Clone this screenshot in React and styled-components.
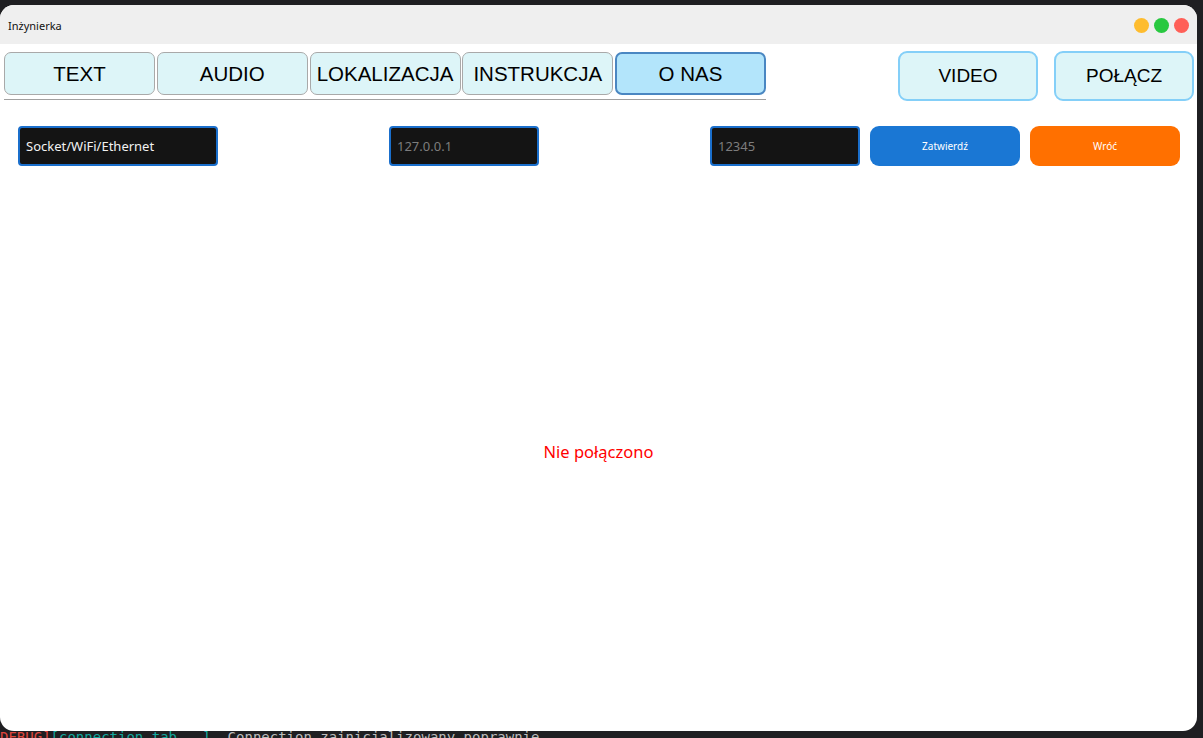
import React from "react";
import styled, { createGlobalStyle } from "styled-components";

const Global = createGlobalStyle`
  html, body { margin: 0; padding: 0; background: #1f1f22; }
  body { width: 1203px; height: 738px; overflow: hidden; font-family: "Liberation Sans", Arial, sans-serif; }
  #root { height: 100%; }
`;

const Desktop = styled.div`
  height: 738px;
  display: flex;
  flex-direction: column;
  background: #1f1f22;
`;

const TopStrip = styled.div`
  height: 5px;
  flex: none;
`;

const Window = styled.div`
  flex: none;
  height: 726px;
  width: 1197px;
  background: #ffffff;
  border-radius: 14px;
  overflow: hidden;
  display: flex;
  flex-direction: column;
`;

const BottomStrip = styled.div`
  height: 7px;
  overflow: hidden;
  flex: none;
  font-family: "DejaVu Sans Mono", monospace;
  font-size: 14px;
  line-height: 12px;
  white-space: pre;
  color: #bdbdbd;
`;

const Red = styled.span` color: #e0463d; `;
const Teal = styled.span` color: #13a89e; `;

const TitleBar = styled.div`
  height: 39px;
  flex: none;
  background: #efefef;
  display: flex;
  align-items: center;
  padding: 0 8px 0 8px;
  font-family: "Noto Sans", "Open Sans", sans-serif;
  font-size: 11px;
  color: #111;
`;

const Title = styled.div`
  flex: 1;
  padding-top: 2px;
`;

const Lights = styled.div`
  display: flex;
  gap: 5px;
  padding-top: 1px;
`;

const Light = styled.span`
  width: 15px;
  height: 15px;
  border-radius: 50%;
  background: ${(p) => p.$c};
`;

const TopRow = styled.div`
  display: flex;
  align-items: flex-start;
  padding: 7px 3px 0 4px;
`;

const TabGroup = styled.div`
  display: flex;
  flex-direction: column;
`;

const Tabs = styled.div`
  display: flex;
  gap: 1.75px;
  padding-top: 1px;
`;

const Tab = styled.button`
  width: 151px;
  height: 43px;
  box-sizing: border-box;
  border-radius: 7px;
  border: ${(p) => (p.$active ? "2px solid #4a87c2" : "1px solid #a9a9a9")};
  background: ${(p) => (p.$active ? "#b3e5fb" : "#ddf5f8")};
  font-family: "Liberation Sans", Arial, sans-serif;
  font-size: 20.5px;
  color: #000;
  padding: 0;
  margin: 0;
`;

const TabLine = styled.div`
  height: 1px;
  background: #a0a0a0;
  margin-top: 4px;
  width: 762px;
`;

const Side = styled.div`
  margin-left: auto;
  display: flex;
  gap: 16px;
`;

const SideButton = styled.button`
  width: 140px;
  height: 50px;
  box-sizing: border-box;
  border: 2px solid #84cff8;
  border-radius: 9px;
  background: #ddf5f8;
  font-family: "Liberation Sans", Arial, sans-serif;
  font-size: 19px;
  color: #000;
  padding: 0;
`;

const FormRow = styled.div`
  display: grid;
  grid-template-columns: 200px 1fr 150px 1fr 150px 160px 160px;
  padding: 25px 17px 0 18px;
`;

const Input = styled.div`
  grid-column: ${(p) => p.$col};
  height: 40px;
  box-sizing: border-box;
  border: 2px solid #1a6fcc;
  border-radius: 4px;
  background: #141414;
  display: flex;
  align-items: center;
  padding-left: 6px;
  font-family: "Noto Sans", "Open Sans", sans-serif;
  font-size: 13px;
  color: ${(p) => (p.$placeholder ? "#7d7d7d" : "#f2f2f2")};
`;

const Action = styled.button`
  grid-column: ${(p) => p.$col};
  justify-self: end;
  width: 150px;
  height: 40px;
  border: none;
  border-radius: 9px;
  background: ${(p) => p.$bg};
  color: #fff;
  font-family: "Noto Sans", "Open Sans", sans-serif;
  font-size: 10px;
  padding: 0;
`;

const Status = styled.div`
  flex: 1;
  display: flex;
  align-items: center;
  justify-content: center;
  padding-top: 6px;
  font-family: "Noto Sans", "Open Sans", sans-serif;
  font-size: 16.5px;
  color: #ff0000;
`;

const tabs = ["TEXT", "AUDIO", "LOKALIZACJA", "INSTRUKCJA", "O NAS"];

export default function App() {
  return (
    <Desktop>
      <Global />
      <TopStrip />
      <Window>
        <TitleBar>
          <Title>Inżynierka</Title>
          <Lights>
            <Light $c="#febc2e" />
            <Light $c="#28c840" />
            <Light $c="#ff5f57" />
          </Lights>
        </TitleBar>
        <TopRow>
          <TabGroup>
            <Tabs>
              {tabs.map((t) => (
                <Tab key={t} $active={t === "O NAS"}>{t}</Tab>
              ))}
            </Tabs>
            <TabLine />
          </TabGroup>
          <Side>
            <SideButton>VIDEO</SideButton>
            <SideButton>POŁĄCZ</SideButton>
          </Side>
        </TopRow>
        <FormRow>
          <Input $col={1}>Socket/WiFi/Ethernet</Input>
          <Input $col={3} $placeholder>127.0.0.1</Input>
          <Input $col={5} $placeholder>12345</Input>
          <Action $col={6} $bg="#1a77d4">Zatwierdź</Action>
          <Action $col={7} $bg="#ff7000">Wróć</Action>
        </FormRow>
        <Status>Nie połączono</Status>
      </Window>
      <BottomStrip>
        <Red>DEBUG]</Red><Teal>[connection_tab   ]</Teal>  Connection zainicjalizowany poprawnie
      </BottomStrip>
    </Desktop>
  );
}
